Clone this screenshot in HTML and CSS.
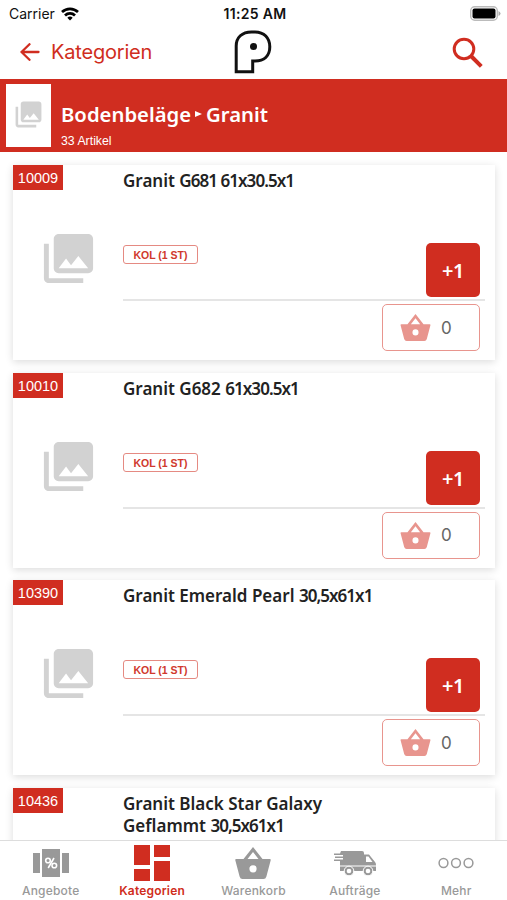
FILE: index.html
```html
<!DOCTYPE html>
<html lang="de">
<head>
    <meta charset="UTF-8">
    <meta name="viewport" content="width=device-width, initial-scale=1.0">
    <title>Bodenbeläge - Granit</title>
    <link rel="stylesheet" href="styles.css">
</head>
<body>
    <!-- Shared icons -->
    <svg class="icon-defs" aria-hidden="true">
        <symbol id="icon-photos" viewBox="0 0 24 24">
            <path d="M22 16V4c0-1.100-.9-2-2-2H8c-1.100 0-2 .9-2 2v12c0 1.100.9 2 2 2h12c1.100 0 2-.9 2-2zm-11-4l2.030 2.710L16 11l4 5H8l3-4zM2 6v14c0 1.100.9 2 2 2h14v-2H4V6H2z"/>
        </symbol>
        <symbol id="icon-basket" viewBox="0 0 36 32">
            <path fill-rule="evenodd" d="M18 0 8.500 12H1.200Q0 12 .3 13.300L4.600 29.500Q5.300 32 7.500 32H28.500Q30.700 32 31.400 29.500L35.700 13.300Q36 12 34.800 12H27.500ZM18 5 23.500 12H12.500ZM18 18.200a3.600 3.600 0 1 1 0 7.200a3.600 3.600 0 1 1 0-7.200z"/>
        </symbol>
    </svg>

    <div class="app">
        <div class="status">
            <div class="carrier">
                <span>Carrier</span>
                <svg width="18" height="14" viewBox="0 0 18 14" fill="none" stroke="#000" stroke-width="2.700">
                    <path d="M1 5C5.500.7 12.500.7 17 5"/>
                    <path d="M4 8.500C6.800 5.700 11.200 5.700 14 8.500"/>
                    <path d="M9 13.600 6.300 10.700Q9 8.500 11.700 10.700Z" fill="#000" stroke="none"/>
                </svg>
            </div>
            <div class="clock">11:25 AM</div>
            <svg class="battery" width="31" height="15" viewBox="0 0 31 15">
                <rect x=".7" y=".7" width="26.600" height="13.600" rx="4" fill="#fff" stroke="#bbb" stroke-width="1.400"/>
                <rect x="2.500" y="2.500" width="23" height="10" rx="2" fill="#000"/>
                <path d="M28.500 5Q30.500 6 30.500 7.500T28.500 10Z" fill="#aaa"/>
            </svg>
        </div>

        <div class="navbar">
            <div class="back">
                <svg width="20" height="18" viewBox="0 0 20 18" fill="none" stroke="#d02d20" stroke-width="2.300" stroke-linecap="round" stroke-linejoin="round">
                    <path d="M18.500 9H1.500M9.500 1.200 1.500 9l8 7.800"/>
                </svg>
                <span>Kategorien</span>
            </div>
            <svg class="logo" width="38" height="44" viewBox="0 0 38 44">
                <path d="M2.200 41.700V16C2.200 7.500 8 1.900 17.500 1.900H21C30 1.900 35.800 8 35.800 16.800C35.800 26 30 31 21 31H18.700V41.700Z" fill="#fff" stroke="#111" stroke-width="3"/>
                <circle cx="19.500" cy="16.500" r="3.500" fill="#111"/>
            </svg>
            <svg class="search" width="31" height="31" viewBox="0 0 31 31" fill="none" stroke="#d02d20">
                <circle cx="12" cy="12" r="9.800" stroke-width="3"/>
                <path d="M19 19 29.300 29.300" stroke-width="4"/>
            </svg>
        </div>

        <div class="category">
            <div class="category-image">
                <svg class="photos-small"><use href="#icon-photos"/></svg>
            </div>
            <div class="category-text">
                <div class="category-title">
                    <span>Bodenbeläge</span>
                    <svg width="7" height="6" viewBox="0 0 7 6"><path d="M0 0 7 3 0 6Z" fill="#fff"/></svg>
                    <span>Granit</span>
                </div>
                <div class="category-count">33 Artikel</div>
            </div>
        </div>

        <div class="list">
            <div class="card">
                <div class="card-left">
                    <span class="number">10009</span>
                    <svg class="photos"><use href="#icon-photos"/></svg>
                </div>
                <div class="card-right">
                    <div class="card-main">
                        <div class="name">Granit <span class="size">G681 61x30.5x1</span></div>
                        <div class="unit">KOL (1 ST)</div>
                        <div class="add">+1</div>
                    </div>
                    <div class="amount"><svg><use href="#icon-basket"/></svg><span>0</span></div>
                </div>
            </div>

            <div class="card">
                <div class="card-left">
                    <span class="number">10010</span>
                    <svg class="photos"><use href="#icon-photos"/></svg>
                </div>
                <div class="card-right">
                    <div class="card-main">
                        <div class="name">Granit G682 <span class="size">61x30.5x1</span></div>
                        <div class="unit">KOL (1 ST)</div>
                        <div class="add">+1</div>
                    </div>
                    <div class="amount"><svg><use href="#icon-basket"/></svg><span>0</span></div>
                </div>
            </div>

            <div class="card">
                <div class="card-left">
                    <span class="number">10390</span>
                    <svg class="photos"><use href="#icon-photos"/></svg>
                </div>
                <div class="card-right">
                    <div class="card-main">
                        <div class="name">Granit Emerald Pearl <span class="size">30,5x61x1</span></div>
                        <div class="unit">KOL (1 ST)</div>
                        <div class="add">+1</div>
                    </div>
                    <div class="amount"><svg><use href="#icon-basket"/></svg><span>0</span></div>
                </div>
            </div>

            <div class="card">
                <div class="card-left">
                    <span class="number">10436</span>
                </div>
                <div class="card-right">
                    <div class="card-main">
                        <div class="name">Granit Black Star Galaxy<br>Geflammt <span class="size">30,5x61x1</span></div>
                    </div>
                </div>
            </div>
        </div>

        <div class="tabbar">
            <div class="tab">
                <svg width="36" height="28" viewBox="0 0 36 28">
                    <path d="M0 4H7V24H0ZM29 4H36V24H29ZM9 0H27V28H9Z" fill="#999"/>
                    <g fill="none" stroke="#fff" stroke-width="1.600">
                        <circle cx="15" cy="11.500" r="2.300"/>
                        <circle cx="21.300" cy="16.500" r="2.300"/>
                        <path d="M21 9 15.200 19"/>
                    </g>
                </svg>
                <span>Angebote</span>
            </div>
            <div class="tab active">
                <svg width="36" height="36" viewBox="0 0 36 36">
                    <path d="M0 0H16V20H0ZM20 0H36V12H20ZM0 24H16V36H0ZM20 16H36V36H20Z"/>
                </svg>
                <span>Kategorien</span>
            </div>
            <div class="tab">
                <svg width="36" height="32"><use href="#icon-basket"/></svg>
                <span>Warenkorb</span>
            </div>
            <div class="tab">
                <svg width="42" height="25" viewBox="0 0 42 25">
                    <path d="M7 0H28Q30 0 30 2V3.500H35L41 11Q42 12 42 14V20H6V10H0V8.500H9V7H1V5.500H9V4H0V2.500H6Z"/>
                    <path d="M32 5.500H34.500L38.500 11H32Z" fill="#fff"/>
                    <path d="M6 15H42" stroke="#fff" stroke-width="1"/>
                    <g fill="#999" stroke="#fff" stroke-width="1">
                        <circle cx="15" cy="20" r="4.800"/>
                        <circle cx="34" cy="20" r="4.800"/>
                    </g>
                    <g fill="#fff">
                        <circle cx="15" cy="20" r="2.300"/>
                        <circle cx="34" cy="20" r="2.300"/>
                    </g>
                </svg>
                <span>Aufträge</span>
            </div>
            <div class="tab">
                <svg width="36" height="12" viewBox="0 0 36 12">
                    <g fill="none" stroke="#999" stroke-width="1.500">
                        <circle cx="5.500" cy="6" r="4.400"/>
                        <circle cx="18" cy="6" r="4.400"/>
                        <circle cx="30.500" cy="6" r="4.400"/>
                    </g>
                </svg>
                <span>Mehr</span>
            </div>
        </div>
    </div>
</body>
</html>
```

FILE: styles.css
```css
* {
    box-sizing: border-box;
}
body {
    margin: 0;
    font-family: Inter, "Liberation Sans", sans-serif;
    background: #fff;
}
svg {
    display: block;
    flex-shrink: 0;
}
.icon-defs {
    display: none;
}
.app {
    display: flex;
    flex-direction: column;
    height: 900px;
    overflow: hidden;
}
.status {
    display: grid;
    grid-template-columns: 1fr auto 1fr;
    align-items: center;
    height: 27px;
    padding: 0 6px 0 9px;
    font-size: 14px;
    color: #111;
}
.carrier {
    display: flex;
    align-items: center;
    gap: 6px;
}
.clock {
    font-weight: 600;
    font-size: 14px;
    letter-spacing: 0.3px;
}
.battery {
    justify-self: end;
}
.navbar {
    display: grid;
    grid-template-columns: 1fr auto 1fr;
    align-items: center;
    height: 52px;
    padding: 1px 24px 3px 20px;
}
.back {
    display: flex;
    align-items: center;
    gap: 11px;
    font-size: 20px;
    letter-spacing: -0.2px;
    color: #d02d20;
}
.logo {
    margin-left: 3px;
}
.search {
    justify-self: end;
}
.category {
    display: flex;
    height: 73px;
    padding: 5px 6px;
    background: #d02d20;
    color: #fff;
}
.category-image {
    display: flex;
    align-items: center;
    justify-content: center;
    width: 45px;
    height: 63px;
    margin-right: 10px;
    background: #fff;
}
.photos-small {
    width: 31px;
    height: 31px;
    margin-bottom: 2px;
    fill: #d2d2d2;
}
.category-title {
    display: flex;
    align-items: center;
    gap: 4px;
    height: 28px;
    margin-top: 16px;
    font-family: "Noto Sans", sans-serif;
    font-size: 20.300px;
    font-weight: 600;
}
.category-count {
    margin-top: 6px;
    font-family: "Liberation Sans", sans-serif;
    font-size: 12.300px;
    line-height: 14px;
}
.list {
    flex: 1;
    display: flex;
    flex-direction: column;
    gap: 12.700px;
    min-height: 0;
    padding: 13px 12px 0 13px;
    overflow: hidden;
}
.card {
    display: flex;
    flex-shrink: 0;
    height: 195px;
    background: #fff;
    box-shadow: 0 2px 8px rgba(0, 0, 0, 0.14);
}
.card-left {
    width: 110px;
}
.number {
    display: block;
    width: 50px;
    height: 25px;
    background: #d02d20;
    color: #fff;
    font-family: "Liberation Sans", sans-serif;
    font-size: 14.500px;
    line-height: 26px;
    text-align: center;
}
.photos {
    width: 59px;
    height: 59px;
    margin: 39px 0 0 26px;
    fill: #d2d2d2;
}
.card-right {
    flex: 1;
    padding-right: 10px;
}
.card-main {
    display: flex;
    flex-direction: column;
    height: 136px;
    padding: 5px 5px 0 0;
    border-bottom: 2px solid #e5e5e5;
}
.name {
    height: 75px;
    color: #222;
    font-family: "Noto Sans", sans-serif;
    font-size: 17px;
    font-weight: 600;
    line-height: 22px;
    white-space: nowrap;
}
.size {
    letter-spacing: -0.950px;
}
.unit {
    width: 75px;
    height: 19px;
    border: 1px solid #e58a82;
    border-radius: 3px;
    color: #d0392d;
    font-family: "Liberation Sans", sans-serif;
    font-size: 10.500px;
    font-weight: bold;
    line-height: 18px;
    text-align: center;
}
.add {
    align-self: flex-end;
    width: 54px;
    height: 54px;
    margin-top: -21px;
    border-radius: 5px;
    background: #d02d20;
    color: #fff;
    font-family: "Noto Sans", sans-serif;
    font-size: 20px;
    font-weight: 600;
    letter-spacing: -0.500px;
    line-height: 55px;
    text-align: center;
}
.amount {
    display: flex;
    align-items: center;
    gap: 10px;
    width: 98px;
    height: 47px;
    margin: 3px 5px 0 auto;
    padding-left: 17px;
    border: 1px solid #e8958e;
    border-radius: 5px;
    color: #666;
    font-size: 17px;
}
.amount svg {
    width: 31px;
    height: 27px;
    fill: #e8958e;
}
.tabbar {
    display: grid;
    grid-template-columns: repeat(5, 1fr);
    height: 60px;
    border-top: 1px solid #ddd;
    background: #fff;
}
.tab {
    display: grid;
    grid-template-rows: 36px 14px;
    row-gap: 3px;
    align-content: start;
    align-items: center;
    justify-items: center;
    padding-top: 4px;
    color: #999;
    fill: #999;
    font-size: 12px;
    font-weight: 500;
    letter-spacing: 0.200px;
    line-height: 14px;
}
.active {
    color: #d02d20;
    fill: #d02d20;
    font-weight: 600;
}
```
